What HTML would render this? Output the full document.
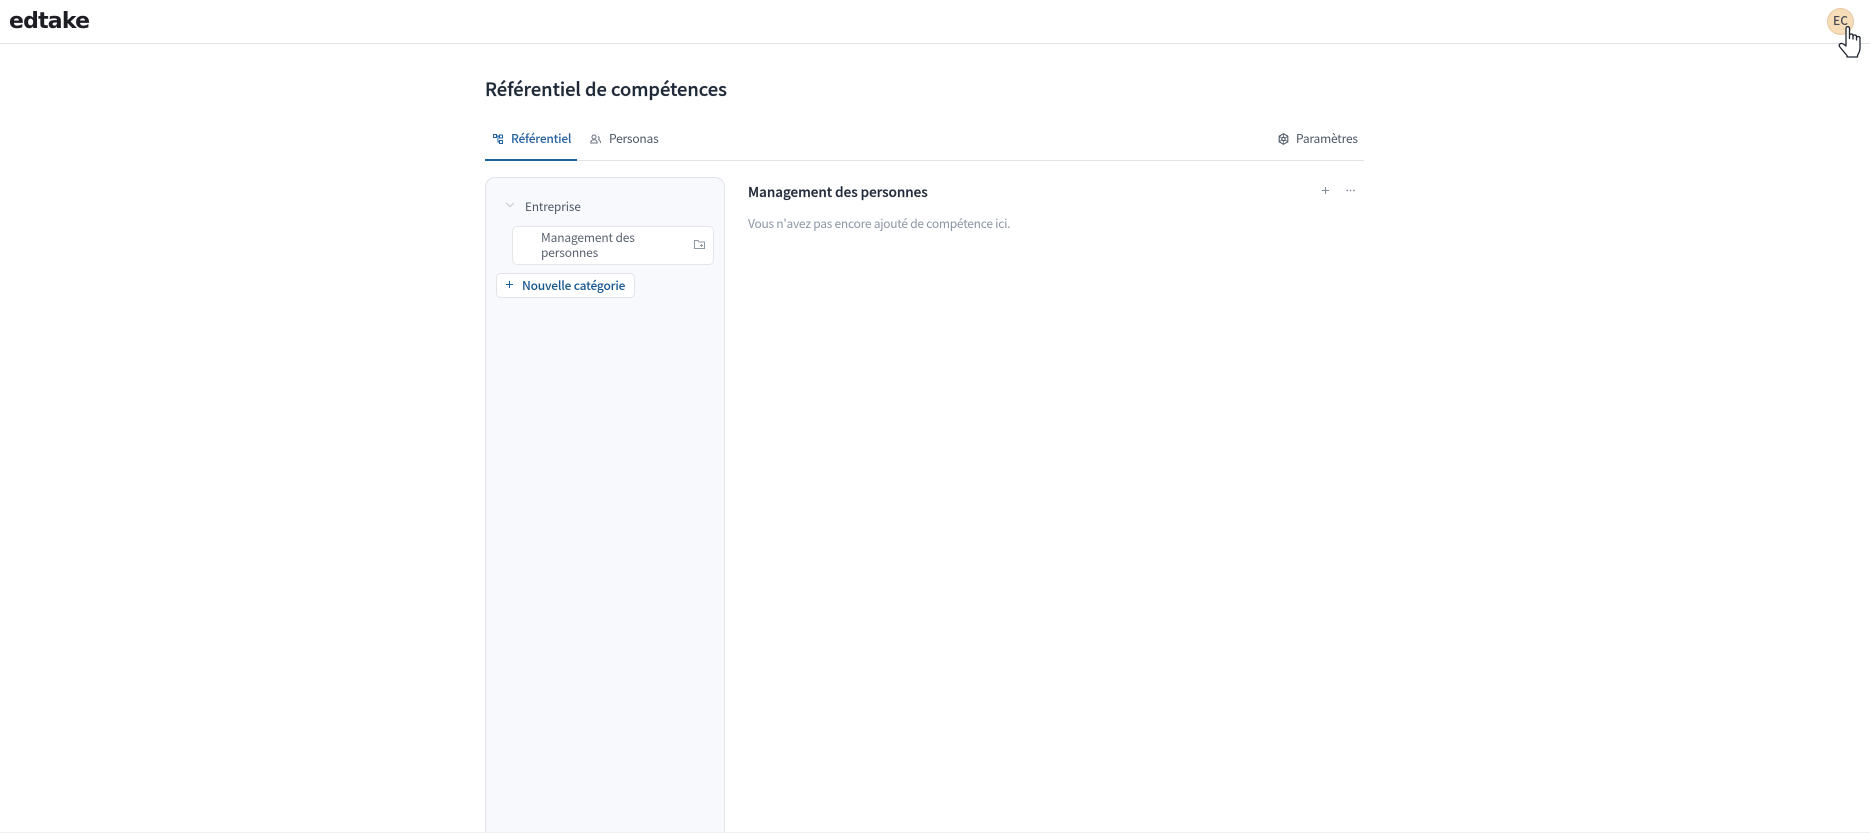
<!DOCTYPE html>
<html lang="fr"><head><meta charset="utf-8"><title>Référentiel de compétences</title>
<style>
html,body{margin:0;padding:0;background:#fff;width:1870px;height:833px;overflow:hidden}
body{position:relative;font-family:"Noto Sans CJK JP","Liberation Sans",sans-serif;color:#4b5563}
.a{position:absolute}
.t{position:absolute;white-space:nowrap;line-height:20px;height:20px}
svg{position:absolute;overflow:visible}
</style></head><body>
<div class="a" style="left:0;top:43px;width:1870px;height:1px;background:#e2e2e4"></div>
<div class="t" style="left:9px;top:6px;height:32px;font:700 22px/32px 'DejaVu Sans',sans-serif;color:#1d1d24;letter-spacing:-.8px">edtake</div>

<div class="a" style="left:1827px;top:8px;width:25px;height:25px;border-radius:50%;background:#f6dcb7;border:1px solid #e6c9a4"></div>
<div class="t" style="left:1827px;top:11px;width:27px;text-align:center;font-size:12px;font-weight:500;color:#4a4a55">EC</div>

<div class="t" style="left:485px;top:76px;height:26px;line-height:26px;font-size:18.300px;font-weight:500;color:#1f2937;-webkit-text-stroke:.25px #1f2937">Référentiel de compétences</div>

<svg style="left:493px;top:134px" width="10" height="10" viewBox="0 0 10 10" fill="none" stroke="#1f5f9e" stroke-width="1"><rect x=".5" y=".5" width="3" height="3"/><rect x="6.500" y="1" width="3" height="3"/><rect x="6.500" y="6.500" width="3" height="3"/><path d="M3.500 2H6.500M5 2V8H6.500"/></svg>
<div class="t" style="left:511px;top:129px;font-size:12px;letter-spacing:-.25px;color:#27629f;font-weight:500">Référentiel</div>
<svg style="left:590px;top:134px" width="11" height="10" viewBox="0 0 11 10" fill="none" stroke="#6b7280" stroke-width="1"><circle cx="4" cy="3" r="2"/><path d="M.8 9c0-2.400 1.500-3.300 3.200-3.300S7.200 6.600 7.200 9zM8 2.500a1.700 1.700 0 0 1 0 3.200M9 6c1 .4 1.500 1.300 1.500 3"/></svg>
<div class="t" style="left:609px;top:129px;font-size:12px;letter-spacing:-.2px;color:#4b5563">Personas</div>
<div class="a" style="left:485px;top:160px;width:879px;height:1px;background:#e3e4e7"></div>
<div class="a" style="left:485px;top:158.500px;width:92px;height:2px;background:#1f5f9e"></div>

<svg style="left:1278px;top:133px" width="11" height="12" viewBox="0 0 11 12" fill="none" stroke="#4b5563" stroke-width="1.100"><path d="M5.500.7l4.300 2.500v5.600l-4.300 2.500-4.300-2.500V3.200z"/><circle cx="5.500" cy="6" r="1.700"/><path d="M5.500.7V4.300M5.500 7.700v3.600M1.200 3.200l2.800 1.900M9.800 8.800 7 6.900M9.800 3.200 7 5.100M1.200 8.800 4 6.900" stroke-width=".7"/></svg>
<div class="t" style="left:1296px;top:129px;font-size:12px;letter-spacing:-.2px;color:#4b5563">Paramètres</div>

<div class="a" style="left:485px;top:177px;width:238px;height:680px;background:#f8f9fd;border:1px solid #e1e3e8;border-radius:10px"></div>
<svg style="left:505px;top:202px" width="10" height="6" viewBox="0 0 10 6" fill="none" stroke="#c0c5ce" stroke-width="1"><path d="M1 .8l4 4 4-4"/></svg>
<div class="t" style="left:525px;top:197px;font-size:11.700px;letter-spacing:-.05px;color:#4b5563">Entreprise</div>
<div class="a" style="left:512px;top:226px;width:200px;height:37px;background:#fff;border:1px solid #e4e6ea;border-radius:5px"></div>
<div class="t" style="left:541px;top:230px;font-size:12px;letter-spacing:-.15px;line-height:15px;height:15px;color:#5a6270">Management des</div>
<div class="t" style="left:541px;top:245px;font-size:12px;letter-spacing:-.15px;line-height:15px;height:15px;color:#5a6270">personnes</div>
<svg style="left:694px;top:240px" width="11" height="9" viewBox="0 0 11 9" fill="none" stroke="#8f98a5" stroke-width="1"><path d="M.5 8.500V.5h3.500l1 1.500h5.500v6.500zM7.500 4v3M6 5.500h3"/></svg>
<div class="a" style="left:496px;top:273px;width:137px;height:23px;background:#fff;border:1px solid #e1e3e8;border-radius:5px"></div>
<svg style="left:506px;top:281px" width="7" height="7" viewBox="0 0 7 7" stroke="#1f5f9e" stroke-width="1"><path d="M3.500 0v7M0 3.500h7"/></svg>
<div class="t" style="left:522px;top:276px;font-size:12px;letter-spacing:-.2px;font-weight:500;color:#17578f">Nouvelle catégorie</div>

<div class="t" style="left:748px;top:181px;font-size:13.450px;font-weight:500;color:#1f2937;-webkit-text-stroke:.2px #1f2937">Management des personnes</div>
<svg style="left:1322px;top:187px" width="7" height="7" viewBox="0 0 7 7" stroke="#858e9b" stroke-width="1"><path d="M3.500 0v7M0 3.500h7"/></svg>
<svg style="left:1346px;top:189px" width="9" height="3" viewBox="0 0 9 3" fill="#858e9b"><circle cx="1.200" cy="1.500" r=".9"/><circle cx="4.500" cy="1.500" r=".9"/><circle cx="7.800" cy="1.500" r=".9"/></svg>
<div class="t" style="left:748px;top:214px;font-size:12px;letter-spacing:-.25px;color:#8b95a3">Vous n'avez pas encore ajouté de compétence ici.</div>

<div class="a" style="left:0;top:832px;width:1870px;height:1px;background:#eeeff1"></div>

<svg style="left:1838px;top:25px" width="26" height="33" viewBox="0 0 26 33" fill="#fff" stroke="#1f2430" stroke-width="1.300" stroke-linejoin="round" stroke-linecap="round"><path d="M8 19V3.500C8 1 11.500 1 11.500 3.500V13.500V10.500C11.500 8.500 15 8.500 15 10.500V14V11.500C15 9.500 18.500 9.500 18.500 11.500V15V13C18.500 11 22 11 22 13V23C22 26 21 28 19.500 30.500V32H9V30.500C6 27 3.500 24 1.500 21.500C.5 20 2 18 4 18.500C6 19 7 20 8 21z"/></svg>
</body></html>
